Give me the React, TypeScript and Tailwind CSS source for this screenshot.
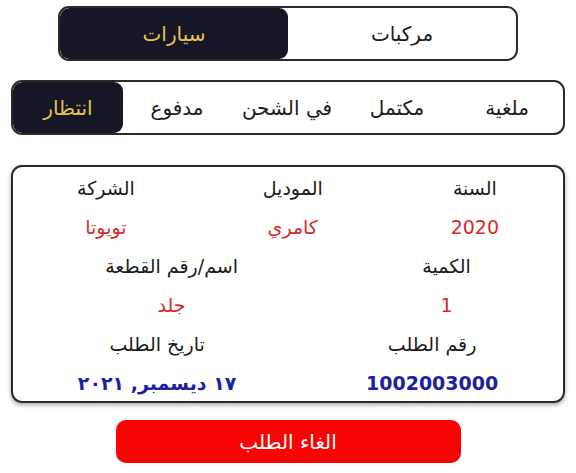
const font = { fontFamily: '"DejaVu Sans", "Noto Sans", sans-serif' };

const Field = ({ label, value, color }: { label: string; value: string; color: string }) => (
  <div className="flex flex-col items-center gap-[14px]">
    <span className="text-[19px] leading-[25px] text-[#1b1b1b]">{label}</span>
    <span className={`text-[19px] leading-[25px] ${color}`}>{value}</span>
  </div>
);

export default function App() {
  return (
    <div dir="rtl" className="w-[576px] h-[473px] bg-white pt-[6px]" style={font}>
      <div className="mx-auto w-[460px] h-[55px] flex border-2 border-[#2a2a2a] rounded-[11px] overflow-hidden">
        <div className="flex-1 flex items-center justify-center text-[20px] text-[#1b1b1b]">مركبات</div>
        <div className="flex-1 flex items-center justify-center text-[20px] bg-[#151726] text-[#e5c44c] rounded-[9px]">سيارات</div>
      </div>

      <div className="mx-[11px] mt-[19px] h-[55px] flex items-center border-2 border-[#2a2a2a] rounded-[11px] overflow-hidden text-[20px] text-[#1b1b1b]">
        <div className="w-[112px] text-center">ملغية</div>
        <div className="w-[108px] text-center">مكتمل</div>
        <div className="w-[112px] text-center">في الشحن</div>
        <div className="w-[108px] text-center">مدفوع</div>
        <div className="flex-1 h-full flex items-center justify-center bg-[#151726] text-[#e5c44c] rounded-[9px]">انتظار</div>
      </div>

      <div className="mx-[11px] mt-[30px] h-[238px] border-2 border-[#2a2a2a] rounded-[11px] shadow-[0_2px_4px_rgba(0,0,0,0.35)] pt-[9px] flex flex-col gap-[14px]">
        <div className="flex justify-around">
          <Field label="السنة" value="2020" color="text-[#d42a2a]" />
          <Field label="الموديل" value="كامري" color="text-[#d42a2a]" />
          <Field label="الشركة" value="تويوتا" color="text-[#d42a2a]" />
        </div>
        <div className="flex justify-around">
          <Field label="الكمية" value="1" color="text-[#d42a2a]" />
          <Field label="اسم/رقم القطعة" value="جلد" color="text-[#d42a2a]" />
        </div>
        <div className="flex justify-around">
          <Field label="رقم الطلب" value="1002003000" color="text-[#1d1fa3] font-bold" />
          <Field label="تاريخ الطلب" value="١٧ ديسمبر, ٢٠٢١" color="text-[#1d1fa3] font-bold" />
        </div>
      </div>

      <div className="mx-auto mt-[17px] w-[345px] h-[43px] bg-[#f80404] rounded-[10px] flex items-center justify-center text-white text-[20px]">
        الغاء الطلب
      </div>
    </div>
  );
}
